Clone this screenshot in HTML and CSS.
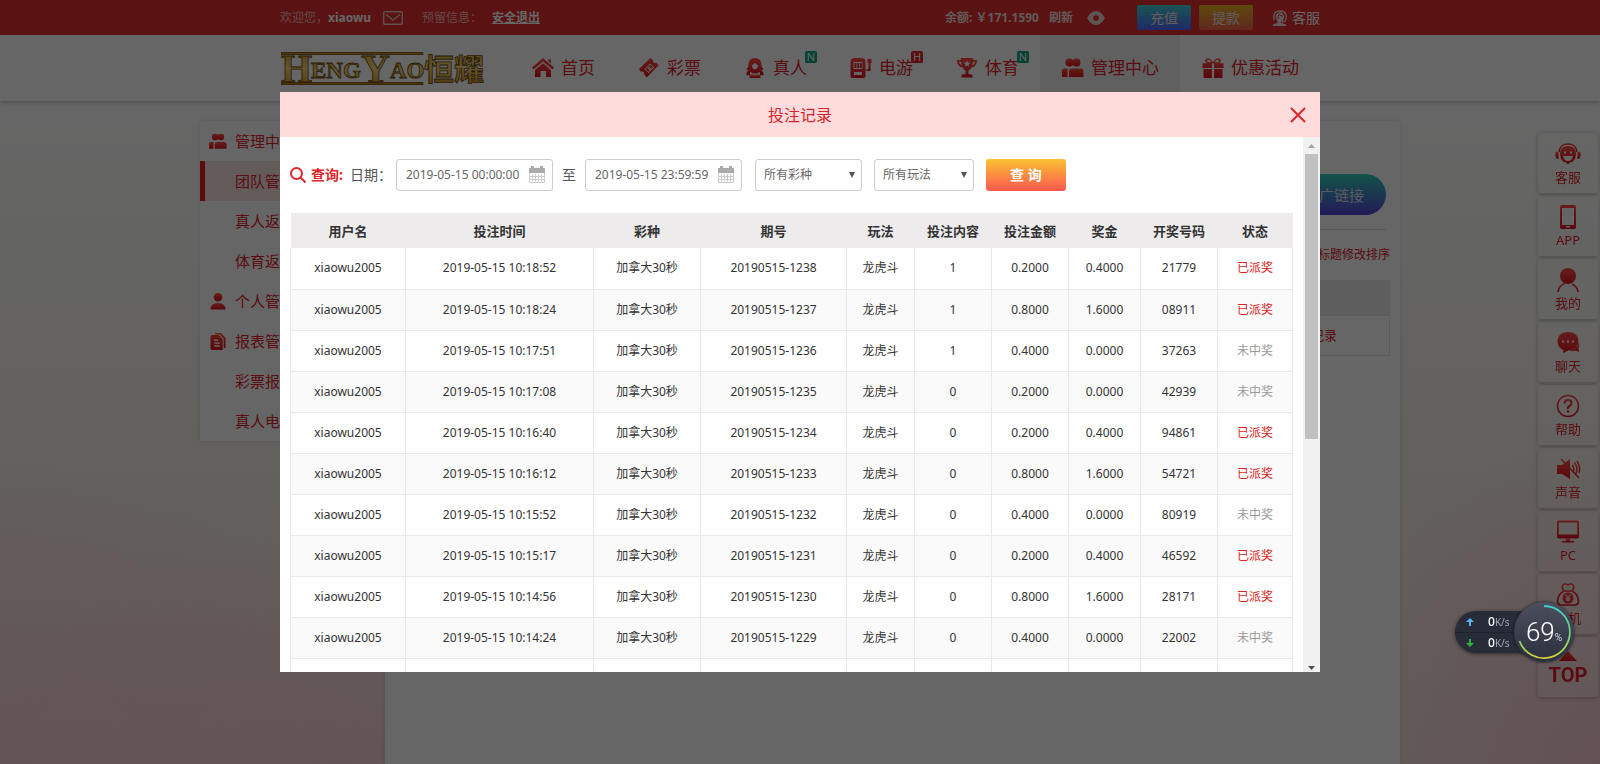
FILE: index.html
```html
<!DOCTYPE html>
<html lang="zh-CN">
<head>
<meta charset="utf-8">
<title>投注记录</title>
<link rel="stylesheet" href="styles.css">
</head>
<body>
<svg class="defs" aria-hidden="true">
  <defs>
    <linearGradient id="red" x1="0" y1="0" x2="0" y2="1"><stop offset="0" stop-color="#ff4b45"/><stop offset="1" stop-color="#dc1420"/></linearGradient>
    <linearGradient id="gold" x1="0" y1="0" x2="0" y2="1"><stop offset="0" stop-color="#c98a10"/><stop offset=".5" stop-color="#f5d980"/><stop offset="1" stop-color="#c07d08"/></linearGradient>
    <linearGradient id="ring" x1="0" y1="0" x2="0" y2="1"><stop offset="0" stop-color="#3fd0c8"/><stop offset=".55" stop-color="#6ed07c"/><stop offset="1" stop-color="#d8d13c"/></linearGradient>
    <symbol id="i-users" viewBox="0 0 22 20"><circle cx="7.500" cy="4.500" r="4"/><circle cx="14.500" cy="4.500" r="4"/><path d="M0 19v-6q0-2.500 2.500-2.500H5.500V19zM7 19v-5.500q0-3 3-3h8.500q3 0 3 3V19z"/></symbol>
    <symbol id="i-home" viewBox="0 0 22 20"><path d="M11 0 22 9.500 20.500 11.500 11 3.600 1.500 11.500 0 9.500zM16 1.500h3v4l-3-2.500zM11 5.200 19 12v7h-5v-6H8.500v6H3v-7z"/></symbol>
    <symbol id="i-ticket" viewBox="0 0 22 22"><path fill-rule="evenodd" d="M0 12 12.500 0l3 2.200q-.8 3 2.200 3.200l1.300-.2L21.500 8 8.500 21.500 5.500 18q.8-3.200-2.200-3.200l-1.500.2zM6 12.300l4.600 4.300 6-6.400-4.600-4.200zM7 12.300l5-5.200 3.400 3-4.800 5.300z"/><path d="m9 11.500 2.500-2.500 1 1-2.500 2.500zM10.500 13l2.500-2.500 1 1-2.500 2.500z" fill="#fff"/></symbol>
    <symbol id="i-girl" viewBox="0 0 20 22"><path fill-rule="evenodd" d="M10 0q7 0 7 7.500 0 3 2.500 5-1.500 1.500-3.500.5 3.500 1 3.500 6h-4v-4l-3.500 2h-4l-3.500-2v4H.500q0-5 3.500-6-2 1-3.500-.5Q3 10.500 3 7.500 3 0 10 0zM10 5q-1.500 2.500-3.500 3 .5 4.500 3.500 4.500T13.500 8Q11.500 7.500 10 5z"/><path d="M4 18.500h5l1 1 1-1h5V22H4z"/></symbol>
    <symbol id="i-slot" viewBox="0 0 21 20"><path fill-rule="evenodd" d="M4 0h7q4 0 4 4v14q0 2-2 2H2q-2 0-2-2V4q0-4 4-4zM3 4v7h9V4zM3.500 14v3h8v-3z"/><path d="M4 5h2v5H4zM6.800 5h2v5h-2zM9.500 5h2v5h-2zM16 11h2V5h-1V1h4v4h-1v8h-4z"/></symbol>
    <symbol id="i-cup" viewBox="0 0 21 21"><path fill-rule="evenodd" d="M4 0h13v2h4q0 7-6 8-1 2.500-3 3v4h2.500q2 0 2 3.500h-12q0-3.500 2-3.500H9v-4q-2-.5-3-3-6-1-6-8h4zM4 4H2q.5 3 3 4zM17 4l-1 4q2.500-1 3-4zM10.500 2.500l-1 2.300-2.500.3 1.800 1.700-.4 2.400 2.100-1.200 2.100 1.200-.4-2.400L14 5.100l-2.500-.3z"/></symbol>
    <symbol id="i-gift" viewBox="0 0 20 19"><path fill-rule="evenodd" d="M0 5h4Q1 2 4 .5 7-.5 10 4 13-.5 16 .5q3 1.500 0 4.500h4v4.500h-9V5H9v4.500H0zM5 4h3.500Q6 1 5 2t0 2zM15 4h-3.500Q14 1 15 2t0 2zM1 10.500h8V19H1zM11 10.500h8V19h-8z"/></symbol>
    <symbol id="i-user" viewBox="0 0 18 18"><circle cx="9" cy="4.500" r="4.500"/><path d="M1 17.500q0-7 8-7t8 7z"/></symbol>
    <symbol id="i-docs" viewBox="0 0 16 18"><path fill-rule="evenodd" d="M5 0h6l5 5v11h-2V6l-4-4.500H5zM2 2h7l4 4.500V18H2q-2 0-2-2V4q0-2 2-2zM4 7v1.500h4V7zM4 10v1.500h6V10zM4 13v1.500h6V13z"/></symbol>
  </defs>
</svg>

<header class="topbar">
  <div class="wrap topbar-row">
    <span class="welcome">欢迎您，<b>xiaowu</b></span>
    <svg class="mail" viewBox="0 0 20 14"><rect x=".7" y=".7" width="18.600" height="12.600" rx="1"/><path d="M3 3.500 10 9l7-5.500"/></svg>
    <span>预留信息：</span>
    <a class="logout" href="#">安全退出</a>
    <span class="spacer"></span>
    <b class="balance">余额: ￥171.1590</b>
    <a class="refresh" href="#">刷新</a>
    <svg class="eye" viewBox="0 0 18 14"><path fill-rule="evenodd" d="M0 7Q4 0 9 0t9 7q-4 7-9 7T0 7zM9 4a3 3 0 1 0 .01 0z"/></svg>
    <button class="mini recharge" type="button">充值</button>
    <button class="mini withdraw" type="button">提款</button>
    <a class="service" href="#"><svg viewBox="0 0 16 16"><path d="M8 2.500q4 0 4 4.500 0 4-3 5v1l5 1.200V16H1v-1.800L5.500 13v-2Q3.500 9 3.500 7 4 2.500 8 2.500z"/><path d="M2 10Q.500 1 8 1t6 8q-.5 3-4 3" fill="none" stroke="#f3dede" stroke-width="1.300"/><path d="M6 9q-.5-2.500 1-4.500 2 1.500 4 1.500" fill="none" stroke="#e12e2e"/></svg>客服</a>
  </div>
</header>

<nav class="nav">
  <div class="wrap nav-row">
    <a class="logo" href="#" aria-label="恒耀">
      <svg viewBox="0 -7 206 48" width="206" height="48">
        <g fill="url(#gold)" stroke="#6d4a0c" stroke-width=".8">
          <path d="M0 1.500h142v2H0zM0 31.500h142v2H0z"/>
          <text x="0" y="31" class="latin big">H</text><text x="30" y="27" class="latin">ENG</text>
          <text x="80" y="31" class="latin big">Y</text><text x="109" y="27" class="latin">AO</text>
          <text x="143" y="29" class="han">恒耀</text>
        </g>
      </svg>
    </a>
    <a class="nav-item" href="#"><svg><use href="#i-home"/></svg>首页</a>
    <a class="nav-item" href="#"><svg><use href="#i-ticket"/></svg>彩票</a>
    <a class="nav-item" href="#"><svg><use href="#i-girl"/></svg>真人<i class="badge">N</i></a>
    <a class="nav-item" href="#"><svg><use href="#i-slot"/></svg>电游<i class="badge hot">H</i></a>
    <a class="nav-item" href="#"><svg><use href="#i-cup"/></svg>体育<i class="badge">N</i></a>
    <a class="nav-item active" href="#"><svg><use href="#i-users"/></svg>管理中心</a>
    <a class="nav-item" href="#"><svg><use href="#i-gift"/></svg>优惠活动</a>
  </div>
</nav>

<div class="page">
  <aside class="side">
    <a class="side-item" href="#"><svg><use href="#i-users"/></svg>管理中心</a>
    <a class="side-item current" href="#">团队管理</a>
    <a class="side-item" href="#">真人返水</a>
    <a class="side-item" href="#">体育返水</a>
    <a class="side-item" href="#"><svg><use href="#i-user"/></svg>个人管理</a>
    <a class="side-item" href="#"><svg><use href="#i-docs"/></svg>报表管理</a>
    <a class="side-item" href="#">彩票报表</a>
    <a class="side-item" href="#">真人电游</a>
  </aside>
  <main class="panel">
    <div class="panel-top"><button class="promo" type="button">推广链接</button></div>
    <p class="hint">点击标题修改排序</p>
    <div class="panel-table"><div class="panel-head"></div><div class="panel-line"><a href="#">记录</a></div></div>
  </main>
</div>

<div class="float">
  <a href="#"><svg viewBox="0 0 26 22"><path d="M4 9q1-8 9-8t9 8" fill="none" stroke="url(#red)" stroke-width="1.500"/><path fill-rule="evenodd" d="M13 3q8 0 8 8.500-.5 7-6 8l-2 2-2-2q-5.500-1-6-8Q5 3 13 3zM8 13q1 5 5 5t5-5zM9 8.500v2h2v-2zM15 8.500v2h2v-2z"/><path d="M1 9h2.500v7H2q-3-3.500-1-7zM22.500 9H25q2 3.500-1 7h-1.500z"/></svg>客服</a>
  <a href="#"><svg viewBox="0 0 26 24"><path fill-rule="evenodd" d="M7 0h12q2 0 2 2v20q0 2-2 2H7q-2 0-2-2V2q0-2 2-2zM7 3v17h12V3zM11 21v1.500h4V21z"/></svg>APP</a>
  <a href="#"><svg viewBox="0 0 26 24"><circle cx="13" cy="8" r="8"/><path d="M3 24q1-8 9-9M17 16q5 2 6 8" fill="none" stroke="url(#red)" stroke-width="1.600"/></svg>我的</a>
  <a href="#"><svg viewBox="0 0 26 22"><path fill-rule="evenodd" d="M13 0q10 0 10.500 9-.5 9-10 9.500L8 21l.500-3Q2.500 15.500 2.500 9 3 0 13 0zM7 8.500v2h2v-2zM12 8.500v2h2v-2zM17 8.500v2h2v-2z"/><path d="M24 10q1 3-.5 6l.5 4-3.500-1.500q-3 1-6 .5Q22 18 24 10z"/></svg>聊天</a>
  <a href="#"><svg viewBox="0 0 26 24"><circle cx="13" cy="12" r="10.500" fill="none" stroke="url(#red)" stroke-width="1.500"/><path d="M9.500 9.500q0-3.500 3.500-3.500t3.500 3q0 2-2 3T13 15" fill="none" stroke="url(#red)" stroke-width="2"/><circle cx="13" cy="17.500" r="1.300"/></svg>帮助</a>
  <a href="#"><svg viewBox="0 0 26 22"><path d="M2 7h5l8-6v20l-8-5H2z"/><path d="M6 1 24 20M17 7q3 3 1 7M19.500 4.500q4 5 1.500 11M22 3q4 6 2 12" fill="none" stroke="url(#red)" stroke-width="1.400"/></svg>声音</a>
  <a href="#"><svg viewBox="0 0 26 23"><path fill-rule="evenodd" d="M4 0h18q2 0 2 2v14q0 2-2 2H4q-2 0-2-2V2q0-2 2-2zM3.800 2v12h18.400V2z"/><path d="M11 18h4v2.500h4V22H7v-1.500h4z"/></svg>PC</a>
  <a href="#"><svg viewBox="0 0 26 24"><path d="M9 8Q6 4 8 2q2-2 5 0 3-2 5 0t-1 6zM9 8q-6 3-6.500 10 0 4 4 4h13q4 0 4-4Q23 11 17 8" fill="none" stroke="url(#red)" stroke-width="1.700"/><circle cx="13" cy="15" r="5.500"/><path d="m10.500 11.500 2.500 3 2.500-3M13 14v5M10.500 15h5M10.500 17h5" fill="none" stroke="#fff"/></svg>手机</a>
  <a class="to-top" href="#"><svg viewBox="0 0 26 12"><path d="M13 1 22 11H4z"/></svg>TOP</a>
</div>

<div class="overlay">
  <section class="dialog" role="dialog" aria-labelledby="dialog-title">
    <header class="dialog-head">
      <h2 id="dialog-title">投注记录</h2>
      <button class="close" type="button" aria-label="关闭"><svg viewBox="0 0 16 16"><path d="m1 1 14 14M15 1 1 15"/></svg></button>
    </header>
    <div class="dialog-body">
      <div class="content">
        <form class="filter">
          <svg class="search" viewBox="0 0 16 16"><circle cx="6.500" cy="6.500" r="5.500"/><path d="m10.500 10.500 5 5"/></svg>
          <strong>查询:</strong>
          <label for="from">日期：</label>
          <span class="date"><input id="from" type="text" value="2019-05-15 00:00:00"><svg viewBox="0 0 16 17"><path d="M0 2h2V0h3v2h6V0h3v2h2v5H0z" fill="#aaa"/><path d="M.500 7v9.500h15V7M3.500 8v7.500M6.500 8v7.500M9.500 8v7.500M12.500 8v7.500M1 10.500h14M1 13.500h14" fill="none" stroke="#ccc"/></svg></span>
          <label class="to" for="until">至</label>
          <span class="date"><input id="until" type="text" value="2019-05-15 23:59:59"><svg viewBox="0 0 16 17"><path d="M0 2h2V0h3v2h6V0h3v2h2v5H0z" fill="#aaa"/><path d="M.500 7v9.500h15V7M3.500 8v7.500M6.500 8v7.500M9.500 8v7.500M12.500 8v7.500M1 10.500h14M1 13.500h14" fill="none" stroke="#ccc"/></svg></span>
          <span class="pick kind"><select aria-label="彩种"><option>所有彩种</option></select><svg viewBox="0 0 6 6"><path d="M0 0h6L3 6z"/></svg></span>
          <span class="pick play"><select aria-label="玩法"><option>所有玩法</option></select><svg viewBox="0 0 6 6"><path d="M0 0h6L3 6z"/></svg></span>
          <button class="query" type="button">查 询</button>
        </form>
        <table class="records">
          <colgroup><col class="c-user"><col class="c-time"><col class="c-kind"><col class="c-issue"><col class="c-play"><col class="c-mid"><col class="c-mid"><col class="c-prize"><col class="c-mid"><col class="c-state"></colgroup>
          <thead><tr><th>用户名</th><th>投注时间</th><th>彩种</th><th>期号</th><th>玩法</th><th>投注内容</th><th>投注金额</th><th>奖金</th><th>开奖号码</th><th>状态</th></tr></thead>
          <tbody>
            <tr><td>xiaowu2005</td><td>2019-05-15 10:18:52</td><td>加拿大30秒</td><td>20190515-1238</td><td>龙虎斗</td><td>1</td><td>0.2000</td><td>0.4000</td><td>21779</td><td class="won">已派奖</td></tr>
            <tr><td>xiaowu2005</td><td>2019-05-15 10:18:24</td><td>加拿大30秒</td><td>20190515-1237</td><td>龙虎斗</td><td>1</td><td>0.8000</td><td>1.6000</td><td>08911</td><td class="won">已派奖</td></tr>
            <tr><td>xiaowu2005</td><td>2019-05-15 10:17:51</td><td>加拿大30秒</td><td>20190515-1236</td><td>龙虎斗</td><td>1</td><td>0.4000</td><td>0.0000</td><td>37263</td><td class="lost">未中奖</td></tr>
            <tr><td>xiaowu2005</td><td>2019-05-15 10:17:08</td><td>加拿大30秒</td><td>20190515-1235</td><td>龙虎斗</td><td>0</td><td>0.2000</td><td>0.0000</td><td>42939</td><td class="lost">未中奖</td></tr>
            <tr><td>xiaowu2005</td><td>2019-05-15 10:16:40</td><td>加拿大30秒</td><td>20190515-1234</td><td>龙虎斗</td><td>0</td><td>0.2000</td><td>0.4000</td><td>94861</td><td class="won">已派奖</td></tr>
            <tr><td>xiaowu2005</td><td>2019-05-15 10:16:12</td><td>加拿大30秒</td><td>20190515-1233</td><td>龙虎斗</td><td>0</td><td>0.8000</td><td>1.6000</td><td>54721</td><td class="won">已派奖</td></tr>
            <tr><td>xiaowu2005</td><td>2019-05-15 10:15:52</td><td>加拿大30秒</td><td>20190515-1232</td><td>龙虎斗</td><td>0</td><td>0.4000</td><td>0.0000</td><td>80919</td><td class="lost">未中奖</td></tr>
            <tr><td>xiaowu2005</td><td>2019-05-15 10:15:17</td><td>加拿大30秒</td><td>20190515-1231</td><td>龙虎斗</td><td>0</td><td>0.2000</td><td>0.4000</td><td>46592</td><td class="won">已派奖</td></tr>
            <tr><td>xiaowu2005</td><td>2019-05-15 10:14:56</td><td>加拿大30秒</td><td>20190515-1230</td><td>龙虎斗</td><td>0</td><td>0.8000</td><td>1.6000</td><td>28171</td><td class="won">已派奖</td></tr>
            <tr><td>xiaowu2005</td><td>2019-05-15 10:14:24</td><td>加拿大30秒</td><td>20190515-1229</td><td>龙虎斗</td><td>0</td><td>0.4000</td><td>0.0000</td><td>22002</td><td class="lost">未中奖</td></tr>
            <tr><td></td><td></td><td></td><td></td><td></td><td></td><td></td><td></td><td></td><td></td></tr>
          </tbody>
        </table>
      </div>
      <div class="scrollbar">
        <svg viewBox="0 0 17 17"><path d="m5 11 3.500-4L12 11z" fill="#a3a3a3"/></svg>
        <span class="thumb"></span>
        <svg class="down" viewBox="0 0 17 17"><path d="m5 11 3.500 4L12 11z" fill="#505050"/></svg>
      </div>
    </div>
  </section>
</div>

<div class="meter">
  <div class="rates">
    <span><svg viewBox="0 0 8 8"><path d="M4 0 8 4H5v4H3V4H0z" fill="#5bb4f0"/></svg><b>0</b><small>K/s</small></span>
    <span><svg viewBox="0 0 8 8"><path d="M4 8 0 4h3V0h2v4h3z" fill="#2fb13a"/></svg><b>0</b><small>K/s</small></span>
  </div>
  <div class="dial">
    <svg viewBox="0 0 60 60"><path d="M30 4A26 26 0 1 1 5.500 39" fill="none" stroke="url(#ring)" stroke-width="1.800"/></svg>
    <span>69</span><small>%</small>
  </div>
</div>
</body>
</html>
```
FILE: styles.css
```css
* { box-sizing: border-box; }

body {
  margin: 0;
  height: 100vh;
  overflow: hidden;
  display: flex;
  flex-direction: column;
  font: 12px/20px "Noto Sans", "Noto Sans CJK SC", sans-serif;
  color: #333;
  background:
    radial-gradient(ellipse 420px 320px at 0 100%, rgba(250, 190, 200, .6), transparent),
    radial-gradient(ellipse 340px 240px at 340px 100%, rgba(250, 190, 200, .55), transparent),
    radial-gradient(ellipse 300px 340px at 100% 100%, rgba(250, 180, 195, .6), transparent),
    linear-gradient(#fff 100px, #fafaf6 260px, #f8f2ea 480px, #f5e9e2);
}
a { color: inherit; text-decoration: none; }
button, input, select { font: inherit; }
.defs { position: absolute; width: 0; height: 0; }

.wrap { width: 100%; max-width: 1040px; margin: 0 auto; }

/* top bar */
.topbar { background: #e12e2e; color: #f9b9b6; }
.topbar-row { display: flex; align-items: center; height: 35px; white-space: nowrap; }
.welcome b { color: #fff; }
.mail { width: 20px; height: 14px; margin: 0 19px 0 12px; fill: none; stroke: #f3c8c8; stroke-width: 1.4; }
.logout { margin-left: 10px; font-weight: bold; color: #fff; text-decoration: underline; }
.spacer { flex: 1; }
.balance, .refresh { color: #f8dede; font-weight: bold; }
.refresh { margin-left: 10px; }
.eye { width: 18px; height: 14px; margin: 0 32px 0 14px; fill: #eed2d2; }
.mini { width: 54px; height: 25px; padding: 0; margin-right: 8px; border: 0; border-radius: 2px; font-size: 14px; line-height: 25px; color: #f3e4e4; }
.recharge { background: linear-gradient(#3fd2d0, #5067ff); }
.withdraw { background: linear-gradient(#e8b422, #ef6348); }
.service { display: flex; align-items: center; gap: 4px; margin-left: 11px; font-size: 14px; color: #fff; }
.service svg { width: 16px; height: 16px; fill: #f3dede; }

/* navigation */
.nav { background: #fff; box-shadow: 0 2px 4px rgba(0, 0, 0, .2); }
.nav-row { display: flex; height: 66px; }
.logo { width: 230px; padding: 9px 0 0 1px; }
.latin { font: bold 23px "Liberation Serif", serif; }
.latin.big { font-size: 40px; }
.han { font: bold 30px "Noto Sans CJK SC", sans-serif; }
.nav-item { position: relative; display: flex; align-items: center; gap: 6px; height: 66px; padding: 0 21px; font-size: 17px; color: #e0202a; white-space: nowrap; }
.nav-item svg { width: 24px; height: 20px; fill: url(#red); }
.nav-item.active { background: #efefef; }
.badge { position: absolute; top: 16px; right: 11px; width: 12px; height: 12px; border-radius: 2px; background: #12a184; color: #fff; font: 11px/12px "Noto Sans", sans-serif; text-align: center; }
.badge.hot { background: #e0202a; }

/* page behind the dialog */
.page { flex: 1; display: flex; gap: 10px; align-items: flex-start; width: 100%; max-width: 1200px; margin: 0 auto; padding-top: 20px; }
.side { width: 175px; background: #fff; box-shadow: 0 0 6px rgba(0, 0, 0, .12); }
.side-item { display: flex; align-items: center; height: 40px; padding-left: 35px; font-size: 15px; color: #e0202a; }
.side-item svg { width: 18px; height: 17px; margin: 0 8px 0 -26px; fill: url(#red); }
.side-item.current { border-left: 5px solid #e0202a; padding-left: 30px; background: #f8e2e2; }
.panel { flex: 1; align-self: stretch; background: #fff; box-shadow: 0 0 6px rgba(0, 0, 0, .12); padding: 0 10px; color: #e0202a; }
.panel-top { display: flex; justify-content: flex-end; margin: 0 4px; padding: 53px 0 14px; border-bottom: 1px solid #ddd; }
.promo { width: 104px; height: 41px; padding: 0; border: 0; border-radius: 21px; font-size: 15px; color: #dde; background: linear-gradient(#2fcdb4, #5a42dc); }
.hint { margin: 0; padding: 15px 0; text-align: right; }
.panel-head { height: 35px; background: #ececec; }
.panel-line { height: 41px; padding: 9px 52px; text-align: right; font-size: 13px; border: 1px solid #e4e4e4; }

.float { position: fixed; top: 133px; right: 2px; display: flex; flex-direction: column; gap: 3px; }
.float a { display: flex; flex-direction: column; align-items: center; gap: 1px; width: 60px; height: 60px; padding-top: 9px; border-radius: 3px; background: rgba(255, 255, 255, .2); box-shadow: 0 1px 4px rgba(0, 0, 0, .25); font-size: 13px; color: #e0202a; }
.float svg { width: 26px; height: 24px; fill: url(#red); }
.float .to-top { padding-top: 12px; gap: 0; font: bold 20px/24px Roboto, sans-serif; }
.float .to-top svg { height: 14px; }

/* dialog */
.overlay { position: fixed; inset: 0; display: grid; place-items: center; background: rgba(0, 0, 0, .6); }
.dialog { display: flex; flex-direction: column; width: 100%; max-width: 1040px; height: calc(100vh - 184px); background: #fff; }
.dialog-head { display: flex; align-items: center; height: 45px; padding: 0 14px 0 30px; background: #ffdcdc; }
.dialog-head h2 { flex: 1; margin: 0; font-size: 16px; font-weight: normal; text-align: center; color: #d8242c; }
.close { width: 16px; height: 16px; padding: 0; border: 0; background: none; }
.close svg { display: block; fill: none; stroke: #e0262c; stroke-width: 2; }
.dialog-body { flex: 1; display: flex; min-height: 0; overflow: hidden; }
.content { flex: 1; padding: 22px 10px 0; }

.filter { display: flex; align-items: center; height: 32px; margin-bottom: 22px; font-size: 14px; color: #555; white-space: nowrap; }
.search { width: 16px; height: 16px; margin-right: 5px; fill: none; stroke: #e0262c; stroke-width: 2; }
.filter strong { margin-right: 7px; color: #e0262c; }
.filter label { width: 46px; }
.filter .to { width: 32px; text-align: center; }
.date, .pick { display: flex; align-items: center; height: 32px; border: 1px solid #ccc; border-radius: 3px; font-size: 12px; color: #666; }
.date { width: 157px; padding: 0 7px 0 9px; }
.date input { flex: 1; min-width: 0; padding: 0; border: 0; outline: 0; background: none; color: inherit; }
.date svg { width: 16px; height: 17px; margin-bottom: 2px; }
.pick { position: relative; }
.kind { width: 107px; margin-left: 13px; }
.play { width: 100px; margin: 0 12px; }
.pick select { width: 100%; height: 100%; padding: 0 8px; border: 0; appearance: none; background: none; color: inherit; }
.pick svg { position: absolute; right: 6px; width: 6px; height: 6px; fill: #555; pointer-events: none; }
.query { width: 80px; height: 32px; padding: 0; border: 0; border-radius: 3px; font-size: 14px; font-weight: bold; color: #fff; background: linear-gradient(#fcc132, #fb5850); }

.records { width: 100%; table-layout: fixed; border-collapse: collapse; text-align: center; }
.records th { height: 35px; padding: 0; font-size: 13px; background: #edebec; }
.records td { height: 41px; padding: 0; border: 1px solid #e6e8ec; border-top: 0; }
.records tr:nth-child(even) td { background: #fafafa; }
.records .won { color: #dd2222; }
.records .lost { color: #999; }
.c-user { width: 115px; }
.c-time { width: 188px; }
.c-kind { width: 107px; }
.c-issue { width: 146px; }
.c-play { width: 68px; }
.c-mid { width: 77px; }
.c-prize { width: 72px; }

.scrollbar { display: flex; flex-direction: column; align-items: center; width: 17px; background: #f1f1f1; }
.scrollbar svg { width: 17px; height: 17px; }
.thumb { width: 13px; height: 285px; background: #c1c1c1; }
.scrollbar .down { margin-top: auto; }

/* network meter */
.meter { position: fixed; top: 602px; right: 26px; display: flex; align-items: center; color: #fff; }
.rates { width: 90px; margin-right: -31px; padding: 1px 0; border-radius: 21px 0 0 21px; background: #272c38; box-shadow: 0 1px 4px rgba(0, 0, 0, .5); }
.rates span { display: flex; align-items: center; height: 20px; padding-left: 11px; }
.rates span + span { border-top: 1px solid #1e222c; }
.rates svg { width: 8px; height: 8px; margin-right: 14px; }
.rates b { font-weight: 500; }
.rates small { font-size: 10px; color: #a4a8b0; }
.dial { position: relative; display: flex; align-items: baseline; justify-content: center; width: 60px; height: 60px; border-radius: 50%; background: linear-gradient(#4c4e5e, #2b303e); box-shadow: 0 0 3px #111; font: 300 26px/60px Roboto, sans-serif; }
.dial svg { position: absolute; inset: 0; }
.dial small { font-size: 10px; }
```
